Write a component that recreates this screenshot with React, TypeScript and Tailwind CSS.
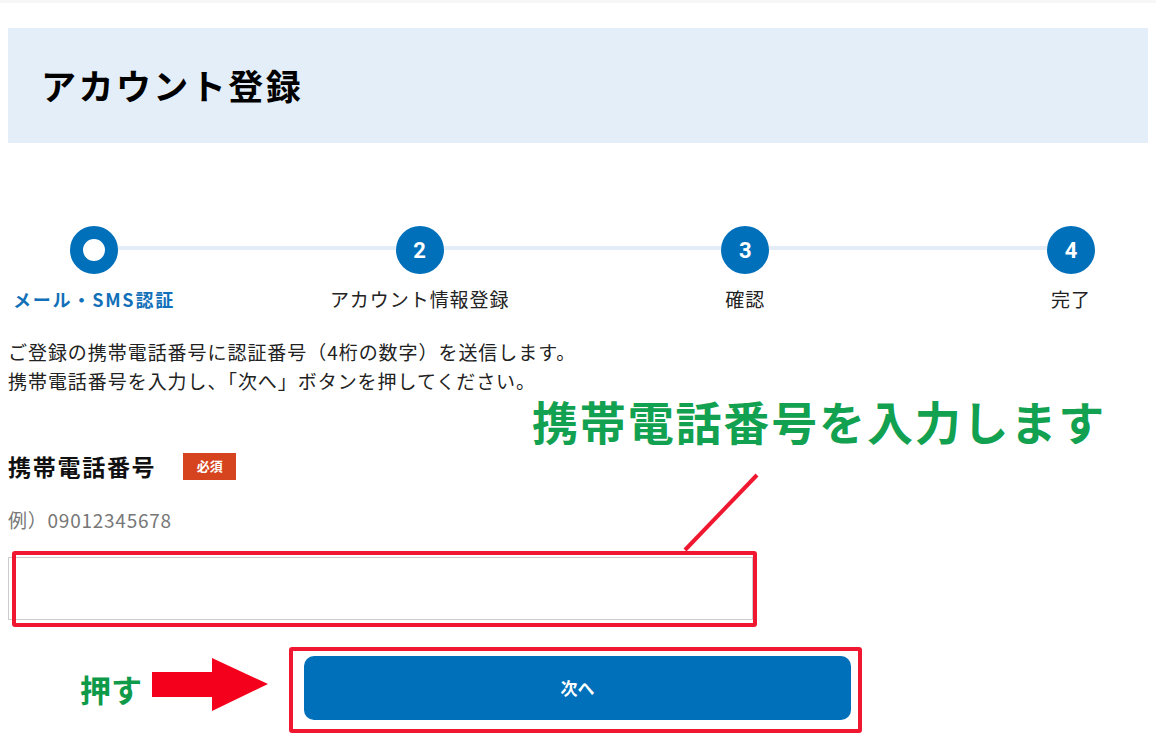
import { Fragment } from "react"

const steps = [
  { label: "メール・SMS認証", active: true },
  { label: "アカウント情報登録", num: "2" },
  { label: "確認", num: "3" },
  { label: "完了", num: "4" },
]

function Stepper() {
  return (
    <div className="relative ml-[9px] mt-[83px] flex w-[1147px] justify-between">
      <div className="absolute left-[85px] right-[85px] top-[20px] h-[4px] bg-[#e3edf7]" />
      {steps.map((s) => (
        <div key={s.label} className="relative flex w-[170px] flex-col items-center">
          {s.active ? (
            <div className="h-12 w-12 rounded-full border-[13px] border-[#0070bb] bg-white" />
          ) : (
            <div className="flex h-12 w-12 items-center justify-center rounded-full bg-[#0070bb] font-['Roboto',sans-serif] text-[22px] font-bold text-white">
              {s.num}
            </div>
          )}
          <div
            className={
              s.active
                ? "mt-[11px] whitespace-nowrap text-[18px] leading-[28px] font-bold tracking-[0.1em] text-[#1270b9]"
                : "mt-[11px] whitespace-nowrap text-[19px] leading-[28px] tracking-[0.05em] text-[#222]"
            }
          >
            {s.label}
          </div>
        </div>
      ))}
    </div>
  )
}

function Arrow() {
  return (
    <svg width="116" height="54" viewBox="0 0 116 54" className="mt-[-7px]">
      <rect x="0" y="14" width="64" height="25" fill="#f5001c" />
      <polygon points="60,0 116,26 60,53" fill="#f5001c" />
    </svg>
  )
}

export default function App() {
  return (
    <div className="relative h-[736px] w-[1156px] overflow-hidden bg-white font-['Noto_Sans_CJK_JP',sans-serif] text-[#222]">
      <div className="h-[3px] bg-[#f7f7f7]" />

      <div className="mx-[8px] mt-[25px] flex h-[115px] items-center bg-[#e3eef8] pl-[33px]">
        <h1 className="text-[35px] font-bold tracking-[0.07em] text-black">アカウント登録</h1>
      </div>

      <Stepper />

      <div className="mt-[24px] px-[8px] text-[19px] leading-[29px] tracking-[0.05em]">
        <p>ご登録の携帯電話番号に認証番号（4桁の数字）を送信します。</p>
        <p>携帯電話番号を入力し、「次へ」ボタンを押してください。</p>
      </div>

      <div className="mt-[55px] flex items-center px-[8px]">
        <span className="text-[23px] leading-[32px] font-bold tracking-[0.075em] text-[#111]">携帯電話番号</span>
        <span className="ml-[27px] flex h-[27px] w-[53px] items-center justify-center bg-[#d6441f] text-[13px] font-bold text-white">
          必須
        </span>
      </div>

      <div className="mt-[23px] px-[8px] text-[19px] leading-[29px] tracking-[0.04em] text-[#777]">例）09012345678</div>

      <div className="relative ml-[8px] mt-[23px] h-[63px] w-[745px]">
        <input className="h-full w-full border border-[#cccccc] bg-white outline-none" />
        <div className="pointer-events-none absolute left-[4px] top-[-6px] h-[76px] w-[745px] rounded-[3px] border-4 border-[#f01830]" />
      </div>

      <div className="mt-[36px] flex items-center">
        <span className="ml-[80px] text-[31px] leading-none font-bold text-[#0f9a4a]">押す</span>
        <div className="ml-[10px]">
          <Arrow />
        </div>
        <div className="relative ml-[36px]">
          <button className="flex h-[64px] w-[547px] items-center justify-center rounded-[10px] bg-[#0070bb] text-[17px] font-bold text-white">
            次へ
          </button>
          <div className="pointer-events-none absolute left-[-15px] top-[-9px] h-[86px] w-[573px] rounded-[3px] border-4 border-[#f01830]" />
        </div>
      </div>

      {/* annotation overlay */}
      <div className="absolute left-[532px] top-[397px] whitespace-nowrap text-[46px] leading-none font-bold tracking-[0.04em] text-[#12a150]">
        携帯電話番号を入力します
      </div>
      <svg className="absolute left-[680px] top-[470px]" width="82" height="85" viewBox="0 0 82 85">
        <line x1="77" y1="5" x2="5" y2="80" stroke="#f01830" strokeWidth="4" />
      </svg>
    </div>
  )
}
